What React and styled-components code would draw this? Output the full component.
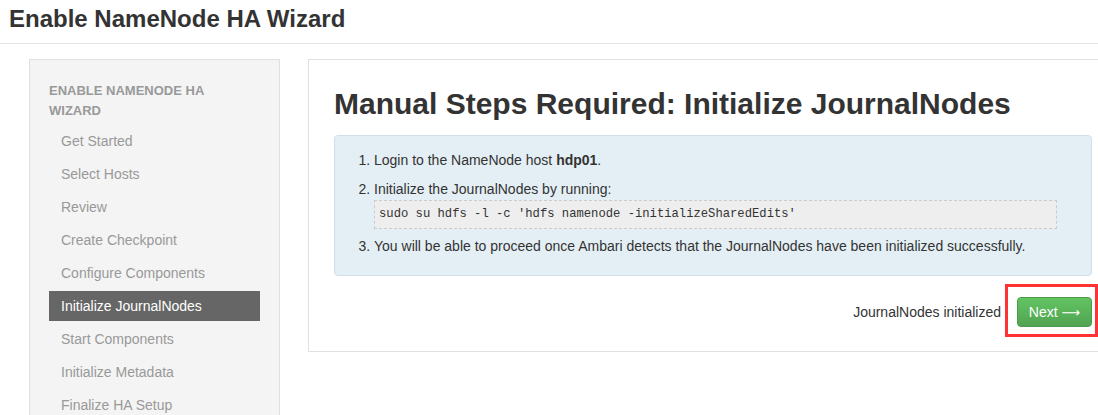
import React from "react";
import styled, { createGlobalStyle } from "styled-components";

const GlobalStyle = createGlobalStyle`
  html, body {
    margin: 0;
    padding: 0;
    overflow: hidden;
    background: #fff;
  }
  body {
    font-family: "Liberation Sans", Arial, sans-serif;
    font-size: 14px;
    color: #333;
  }
`;

const steps = [
  "Get Started",
  "Select Hosts",
  "Review",
  "Create Checkpoint",
  "Configure Components",
  "Initialize JournalNodes",
  "Start Components",
  "Initialize Metadata",
  "Finalize HA Setup",
];

const App = () => {
  return (
    <>
      <GlobalStyle />
      <PageHeader>
        <h1>Enable NameNode HA Wizard</h1>
      </PageHeader>
      <Content>
        <Sidebar>
          <NavTitle>Enable NameNode HA Wizard</NavTitle>
          <NavList>
            {steps.map((s) => (
              <NavItem key={s} active={s === "Initialize JournalNodes"}>
                {s}
              </NavItem>
            ))}
          </NavList>
        </Sidebar>
        <Panel>
          <Title>Manual Steps Required: Initialize JournalNodes</Title>
          <InfoBox>
            <Steps>
              <li>
                Login to the NameNode host <b>hdp01</b>.
              </li>
              <li>
                Initialize the JournalNodes by running:
                <Code>sudo su hdfs -l -c 'hdfs namenode -initializeSharedEdits'</Code>
              </li>
              <li className="last">
                You will be able to proceed once Ambari detects that the
                JournalNodes have been initialized successfully.
              </li>
            </Steps>
          </InfoBox>
          <Footer>
            <span>JournalNodes initialized</span>
            <ButtonWrap>
              <NextButton>
                Next <Arrow>&#x27F6;</Arrow>
              </NextButton>
              <Highlight />
            </ButtonWrap>
          </Footer>
        </Panel>
      </Content>
    </>
  );
};

export default App;

const PageHeader = styled.div`
  height: 43px;
  border-bottom: 1px solid #e5e5e5;
  padding-left: 9px;

  h1 {
    margin: 0;
    font-size: 24px;
    line-height: 38px;
    font-weight: bold;
    color: #333;
  }
`;

const Content = styled.div`
  display: flex;
  align-items: flex-start;
  gap: 28px;
  padding: 15px 0 0 29px;
`;

const Sidebar = styled.div`
  flex: 0 0 251px;
  box-sizing: border-box;
  height: 357px;
  overflow: hidden;
  background: #f4f4f4;
  border: 1px solid #e0e0e0;
  padding: 21px 19px 0 19px;
`;

const NavTitle = styled.div`
  font-size: 13px;
  font-weight: bold;
  line-height: 20px;
  text-transform: uppercase;
  color: #999;
  width: 170px;
  margin-bottom: 5px;
`;

const NavList = styled.div`
  display: flex;
  flex-direction: column;
  gap: 3px;
`;

const NavItem = styled.div`
  height: 30px;
  line-height: 30px;
  padding-left: 12px;
  font-size: 14px;
  color: ${(p) => (p.active ? "#fff" : "#999")};
  background: ${(p) => (p.active ? "#666" : "transparent")};
`;

const Panel = styled.div`
  flex: 0 0 810px;
  box-sizing: border-box;
  border: 1px solid #e0e0e0;
  padding: 0 25px 24px 25px;
`;

const Title = styled.h2`
  margin: 21px 0 0 0;
  font-size: 30px;
  line-height: 46px;
  font-weight: bold;
  color: #333;
`;

const InfoBox = styled.div`
  margin-top: 8px;
  background: #e4eff5;
  border: 1px solid #cfe0e9;
  border-radius: 4px;
  padding: 14px 19px 19px 19px;
`;

const Steps = styled.ol`
  margin: 0;
  padding-left: 20px;

  li {
    line-height: 20px;
    margin-bottom: 9px;
  }

  li.last {
    margin-top: -2px;
    margin-bottom: 0;
  }
`;

const Code = styled.div`
  width: 683px;
  box-sizing: border-box;
  margin-top: 1px;
  padding: 6px 4px;
  background: #eee;
  border: 1px dashed #ccc;
  font-family: "Liberation Mono", "Courier New", monospace;
  font-size: 12.2px;
  line-height: 15px;
  color: #333;
`;

const Footer = styled.div`
  display: flex;
  justify-content: flex-end;
  align-items: center;
  gap: 16px;
  margin-top: 21px;
  font-size: 14px;
`;

const ButtonWrap = styled.div`
  position: relative;
`;

const NextButton = styled.button`
  width: 75px;
  height: 30px;
  border: 1px solid #4a9a4a;
  border-radius: 4px;
  background: linear-gradient(#62c462, #51a351);
  color: #fff;
  font-family: "Liberation Sans", Arial, sans-serif;
  font-size: 14px;
  padding: 0;
  cursor: pointer;
`;

const Arrow = styled.span`
  font-family: "DejaVu Sans", sans-serif;
  font-size: 13px;
`;

const Highlight = styled.div`
  position: absolute;
  left: -12px;
  top: -13px;
  right: -6px;
  bottom: -10px;
  border: 3px solid #ff3333;
  pointer-events: none;
`;
